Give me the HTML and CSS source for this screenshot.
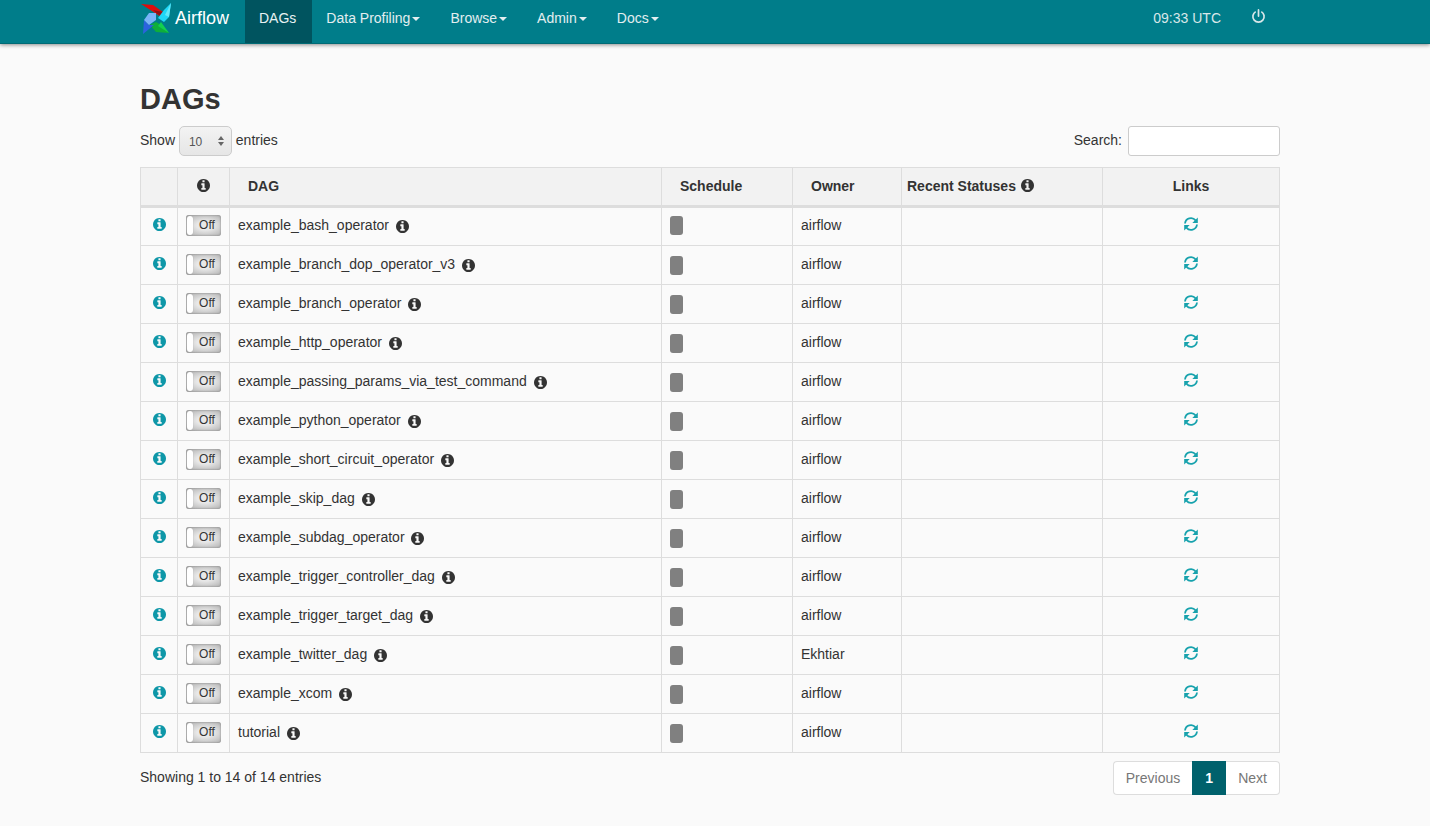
FILE: index.html
```html
<!DOCTYPE html>
<html lang="en">
<head>
<meta charset="utf-8">
<title>Airflow - DAGs</title>
<link rel="stylesheet" href="styles.css">
</head>
<body>
<svg class="defs" width="0" height="0">
  <symbol id="info" viewBox="0 0 1536 1536"><path d="M1024 1248v-160q0-14-9-23t-23-9h-96V544q0-14-9-23t-23-9H544q-14 0-23 9t-9 23v160q0 14 9 23t23 9h96v320h-96q-14 0-23 9t-9 23v160q0 14 9 23t23 9h448q14 0 23-9t9-23zM896 352V192q0-14-9-23t-23-9H672q-14 0-23 9t-9 23v160q0 14 9 23t23 9h192q14 0 23-9t9-23zm640 416q0 209-103 385.500T1153.500 1433 768 1536t-385.500-103T103 1153.500 0 768t103-385.500T382.500 103 768 0t385.500 103T1433 382.500 1536 768z"/></symbol>
  <symbol id="refresh" viewBox="0 0 16 16">
    <path d="M2 7.500A6 6 0 0 1 12.600 4.400" fill="none" stroke="currentColor" stroke-width="1.800"/>
    <path d="M14 8.500A6 6 0 0 1 3.400 11.600" fill="none" stroke="currentColor" stroke-width="1.800"/>
    <polygon points="14.800,1.500 14.800,7 9.300,7" fill="currentColor"/>
    <polygon points="1.200,14.500 1.200,9 6.700,9" fill="currentColor"/>
  </symbol>
</svg>
<nav class="navbar">
  <div class="nav-inner">
    <a class="brand">
      <svg class="logo" viewBox="0 0 32 32">
        <polygon points="0,1 12,2 22,9 20,14 14,10" fill="#e00c0c"/>
        <polygon points="12,7 22,9 20,14" fill="#8f1216"/>
        <polygon points="30,0 28,14 23,19 17,15 23,7" fill="#1fd7f7"/>
        <polygon points="30,0 28,14 24,12" fill="#63e9fa"/>
        <polygon points="28,30 15,29 9,22 15,19 22,23" fill="#0fae3a"/>
        <polygon points="28,30 17,23 20,19" fill="#13d04f"/>
        <polygon points="2,31 3,17 8,22 13,22" fill="#2b63de"/>
        <polygon points="8,10 15,10 15,17 8,22 3,17" fill="#79b4f8"/>
      </svg>
      <span>Airflow</span>
    </a>
    <ul class="menu">
      <li class="active"><a>DAGs</a></li>
      <li><a>Data Profiling<i class="caret"></i></a></li>
      <li><a>Browse<i class="caret"></i></a></li>
      <li><a>Admin<i class="caret"></i></a></li>
      <li><a>Docs<i class="caret"></i></a></li>
    </ul>
    <div class="nav-right">
      <span class="clock">09:33 UTC</span>
      <svg class="power" viewBox="0 0 16 16"><path d="M5 2.800A6 6 0 1 0 11 2.800" fill="none" stroke="currentColor" stroke-width="1.800"/><path d="M8 1v6.500" fill="none" stroke="currentColor" stroke-width="1.800" stroke-linecap="round"/></svg>
    </div>
  </div>
</nav>
<main class="container">
  <h1>DAGs</h1>
  <div class="controls">
    <div class="length">Show <span class="select">10<i class="spin"></i></span> entries</div>
    <div class="search"><span class="search-label">Search:</span> <input type="text" aria-label="Search"></div>
  </div>
  <table class="dags">
    <colgroup><col class="c1"><col class="c2"><col class="c3"><col class="c4"><col class="c5"><col class="c6"><col class="c7"></colgroup>
    <thead>
      <tr>
        <th></th>
        <th class="center"><svg class="ic dark hicon"><use href="#info"/></svg></th>
        <th class="pad">DAG</th>
        <th class="pad">Schedule</th>
        <th class="pad">Owner</th>
        <th>Recent Statuses <svg class="ic dark sicon"><use href="#info"/></svg></th>
        <th class="center">Links</th>
      </tr>
    </thead>
    <tbody>
      <tr><td class="center"><svg class="ic teal"><use href="#info"/></svg></td><td class="center"><span class="toggle"><b></b>Off</span></td><td>example_bash_operator <svg class="ic dark name-i"><use href="#info"/></svg></td><td><span class="sched"></span></td><td>airflow</td><td></td><td class="center"><svg class="ic teal"><use href="#refresh"/></svg></td></tr>
      <tr><td class="center"><svg class="ic teal"><use href="#info"/></svg></td><td class="center"><span class="toggle"><b></b>Off</span></td><td>example_branch_dop_operator_v3 <svg class="ic dark name-i"><use href="#info"/></svg></td><td><span class="sched"></span></td><td>airflow</td><td></td><td class="center"><svg class="ic teal"><use href="#refresh"/></svg></td></tr>
      <tr><td class="center"><svg class="ic teal"><use href="#info"/></svg></td><td class="center"><span class="toggle"><b></b>Off</span></td><td>example_branch_operator <svg class="ic dark name-i"><use href="#info"/></svg></td><td><span class="sched"></span></td><td>airflow</td><td></td><td class="center"><svg class="ic teal"><use href="#refresh"/></svg></td></tr>
      <tr><td class="center"><svg class="ic teal"><use href="#info"/></svg></td><td class="center"><span class="toggle"><b></b>Off</span></td><td>example_http_operator <svg class="ic dark name-i"><use href="#info"/></svg></td><td><span class="sched"></span></td><td>airflow</td><td></td><td class="center"><svg class="ic teal"><use href="#refresh"/></svg></td></tr>
      <tr><td class="center"><svg class="ic teal"><use href="#info"/></svg></td><td class="center"><span class="toggle"><b></b>Off</span></td><td>example_passing_params_via_test_command <svg class="ic dark name-i"><use href="#info"/></svg></td><td><span class="sched"></span></td><td>airflow</td><td></td><td class="center"><svg class="ic teal"><use href="#refresh"/></svg></td></tr>
      <tr><td class="center"><svg class="ic teal"><use href="#info"/></svg></td><td class="center"><span class="toggle"><b></b>Off</span></td><td>example_python_operator <svg class="ic dark name-i"><use href="#info"/></svg></td><td><span class="sched"></span></td><td>airflow</td><td></td><td class="center"><svg class="ic teal"><use href="#refresh"/></svg></td></tr>
      <tr><td class="center"><svg class="ic teal"><use href="#info"/></svg></td><td class="center"><span class="toggle"><b></b>Off</span></td><td>example_short_circuit_operator <svg class="ic dark name-i"><use href="#info"/></svg></td><td><span class="sched"></span></td><td>airflow</td><td></td><td class="center"><svg class="ic teal"><use href="#refresh"/></svg></td></tr>
      <tr><td class="center"><svg class="ic teal"><use href="#info"/></svg></td><td class="center"><span class="toggle"><b></b>Off</span></td><td>example_skip_dag <svg class="ic dark name-i"><use href="#info"/></svg></td><td><span class="sched"></span></td><td>airflow</td><td></td><td class="center"><svg class="ic teal"><use href="#refresh"/></svg></td></tr>
      <tr><td class="center"><svg class="ic teal"><use href="#info"/></svg></td><td class="center"><span class="toggle"><b></b>Off</span></td><td>example_subdag_operator <svg class="ic dark name-i"><use href="#info"/></svg></td><td><span class="sched"></span></td><td>airflow</td><td></td><td class="center"><svg class="ic teal"><use href="#refresh"/></svg></td></tr>
      <tr><td class="center"><svg class="ic teal"><use href="#info"/></svg></td><td class="center"><span class="toggle"><b></b>Off</span></td><td>example_trigger_controller_dag <svg class="ic dark name-i"><use href="#info"/></svg></td><td><span class="sched"></span></td><td>airflow</td><td></td><td class="center"><svg class="ic teal"><use href="#refresh"/></svg></td></tr>
      <tr><td class="center"><svg class="ic teal"><use href="#info"/></svg></td><td class="center"><span class="toggle"><b></b>Off</span></td><td>example_trigger_target_dag <svg class="ic dark name-i"><use href="#info"/></svg></td><td><span class="sched"></span></td><td>airflow</td><td></td><td class="center"><svg class="ic teal"><use href="#refresh"/></svg></td></tr>
      <tr><td class="center"><svg class="ic teal"><use href="#info"/></svg></td><td class="center"><span class="toggle"><b></b>Off</span></td><td>example_twitter_dag <svg class="ic dark name-i"><use href="#info"/></svg></td><td><span class="sched"></span></td><td>Ekhtiar</td><td></td><td class="center"><svg class="ic teal"><use href="#refresh"/></svg></td></tr>
      <tr><td class="center"><svg class="ic teal"><use href="#info"/></svg></td><td class="center"><span class="toggle"><b></b>Off</span></td><td>example_xcom <svg class="ic dark name-i"><use href="#info"/></svg></td><td><span class="sched"></span></td><td>airflow</td><td></td><td class="center"><svg class="ic teal"><use href="#refresh"/></svg></td></tr>
      <tr><td class="center"><svg class="ic teal"><use href="#info"/></svg></td><td class="center"><span class="toggle"><b></b>Off</span></td><td>tutorial <svg class="ic dark name-i"><use href="#info"/></svg></td><td><span class="sched"></span></td><td>airflow</td><td></td><td class="center"><svg class="ic teal"><use href="#refresh"/></svg></td></tr>
    </tbody>
  </table>
  <div class="footer-row">
    <div class="info">Showing 1 to 14 of 14 entries</div>
    <ul class="pager">
      <li class="prev">Previous</li>
      <li class="current">1</li>
      <li class="next">Next</li>
    </ul>
  </div>
</main>
</body>
</html>
```
FILE: styles.css
```css
* { box-sizing: border-box; }
html, body { margin: 0; padding: 0; }
body {
  background: #fafafa;
  color: #333;
  font-family: "Liberation Sans", Arial, sans-serif;
  font-size: 14px;
  line-height: 20px;
  height: 826px;
  overflow: hidden;
}
.defs { display: block; height: 0; }

.navbar {
  height: 44px;
  background: #007d8a;
  border-bottom: 1px solid #006a75;
  box-shadow: 0 1px 4px rgba(0, 0, 0, .45);
}
.nav-inner {
  width: 1140px;
  margin-left: 140px;
  height: 43px;
  display: flex;
  align-items: stretch;
}
.brand {
  display: flex;
  align-items: center;
  color: #fff;
  font-size: 18px;
  width: 105px;
  height: 35px;
}
.logo { width: 32px; height: 32px; flex: none; margin: 3px 2px 0 1px; }
.brand span { padding-top: 1px; }
.menu { list-style: none; display: flex; margin: 0; padding: 0; }
.menu a {
  display: block;
  padding: 8px 15px 0 14px;
  height: 43px;
  color: #e3eef0;
  font-size: 14px;
}
.menu .active a { background: #00545f; color: #e8f2f3; padding-right: 16px; }
.caret {
  display: inline-block;
  width: 0;
  height: 0;
  margin: 0 1px 0 2px;
  vertical-align: middle;
  border-top: 4px solid #e3eef0;
  border-left: 4.500px solid transparent;
  border-right: 4.500px solid transparent;
}
.nav-right {
  margin-left: auto;
  display: flex;
  align-items: flex-start;
  color: #d9e7e9;
  font-size: 14px;
  padding: 8px 14px 0 0;
}
.clock { margin-right: 30px; }
.power { width: 15px; height: 15px; margin-top: 1px; color: #d9e7e9; }

.container { width: 1140px; margin-left: 140px; }
h1 {
  margin: 0;
  padding-top: 37px;
  font-size: 29px;
  line-height: 36px;
  font-weight: 700;
  color: #333;
}
.controls {
  display: flex;
  justify-content: space-between;
  align-items: center;
  height: 30px;
  margin-top: 9px;
  margin-bottom: 11px;
}
.select {
  position: relative;
  display: inline-block;
  width: 53px;
  height: 30px;
  padding: 5px 0 0 9px;
  vertical-align: middle;
  font-size: 12px;
  color: #555;
  background: linear-gradient(to bottom, #f3f3f3, #e6e6e6);
  border: 1px solid #ccc;
  border-radius: 5px;
}
.spin { position: absolute; right: 6px; top: 9px; width: 7px; height: 10px; }
.spin::before, .spin::after {
  content: "";
  position: absolute;
  left: 0;
  width: 0;
  height: 0;
  border-left: 3.500px solid transparent;
  border-right: 3.500px solid transparent;
}
.spin::before { top: 0; border-bottom: 4px solid #666; }
.spin::after { bottom: 0; border-top: 4px solid #666; }
.search { display: flex; align-items: center; gap: 6px; }
.search-label { position: relative; top: -1px; }
.search input {
  width: 152px;
  height: 30px;
  background: #fff;
  border: 1px solid #ccc;
  border-radius: 3px;
}

.dags {
  width: 1139px;
  table-layout: fixed;
  border-collapse: collapse;
}
.c1 { width: 37px; }
.c2 { width: 52px; }
.c3 { width: 432px; }
.c4 { width: 131px; }
.c5 { width: 109px; }
.c6 { width: 201px; }
.c7 { width: 177px; }
.dags th {
  height: 39px;
  padding: 0 5px 2px;
  text-align: left;
  font-weight: 700;
  background: #f2f2f2;
  border: 1px solid #ddd;
  border-bottom-width: 3px;
  white-space: nowrap;
}
.dags th.pad { padding-left: 18px; }
.dags th.center, .dags td.center { text-align: center; }
.dags td {
  height: 39px;
  padding: 0 8px 2px;
  border: 1px solid #ddd;
  white-space: nowrap;
  vertical-align: middle;
}
.dags td.center, .dags th.center { padding: 0 0 2px; }
.dags tbody tr:first-child td { padding-bottom: 4px; }
.ic {
  display: inline-block;
  width: 13px;
  height: 13px;
  vertical-align: -1px;
  position: relative;
  top: -1px;
}
.ic.dark { fill: #333; }
.ic.teal { fill: #17a2ad; color: #17a2ad; }
.ic.hicon { top: 0; margin-right: 1px; }
.ic.sicon { top: 0; margin-left: 1px; }
.name-i { margin-left: 3px; top: 2px; }
.dags td:first-child .ic { fill: #0e97a8; top: 0; }
.dags td:last-child .ic { top: 1px; width: 16px; height: 16px; }
.toggle {
  position: relative;
  display: inline-block;
  width: 35px;
  height: 21px;
  padding-left: 7px;
  text-align: center;
  font-size: 12px;
  line-height: 21px;
  color: #333;
  vertical-align: middle;
  top: 0;
  border-radius: 3px;
  background: radial-gradient(ellipse at 55% 50%, #e8e8e8 30%, #a9a9a9 100%);
  box-shadow: inset 0 0 2px #777;
}
.dags tbody tr:first-child .toggle { top: 1px; }
.toggle b {
  position: absolute;
  left: 1px;
  top: 1px;
  bottom: 1px;
  width: 6px;
  background: #fff;
  border-radius: 3px;
  box-shadow: 0 0 1px #999;
}
.sched {
  display: inline-block;
  width: 13px;
  height: 19px;
  margin-top: 1px;
  background: #808080;
  border-radius: 3px;
  vertical-align: middle;
}

.footer-row {
  display: flex;
  justify-content: space-between;
  align-items: flex-start;
  margin-top: 8px;
}
.info { padding-top: 6px; }
.pager {
  list-style: none;
  margin: 0;
  padding: 0;
  display: flex;
  height: 34px;
  line-height: 32px;
  color: #777;
}
.pager li { padding: 0 12px; background: #fff; border: 1px solid #ddd; }
.pager .prev { border-radius: 4px 0 0 4px; border-right: 0; }
.pager .current { background: #00616c; border-color: #00616c; color: #fff; font-weight: 700; padding: 0 12px; width: 34px; }
.pager .next { border-radius: 0 4px 4px 0; border-left: 0; }
```
